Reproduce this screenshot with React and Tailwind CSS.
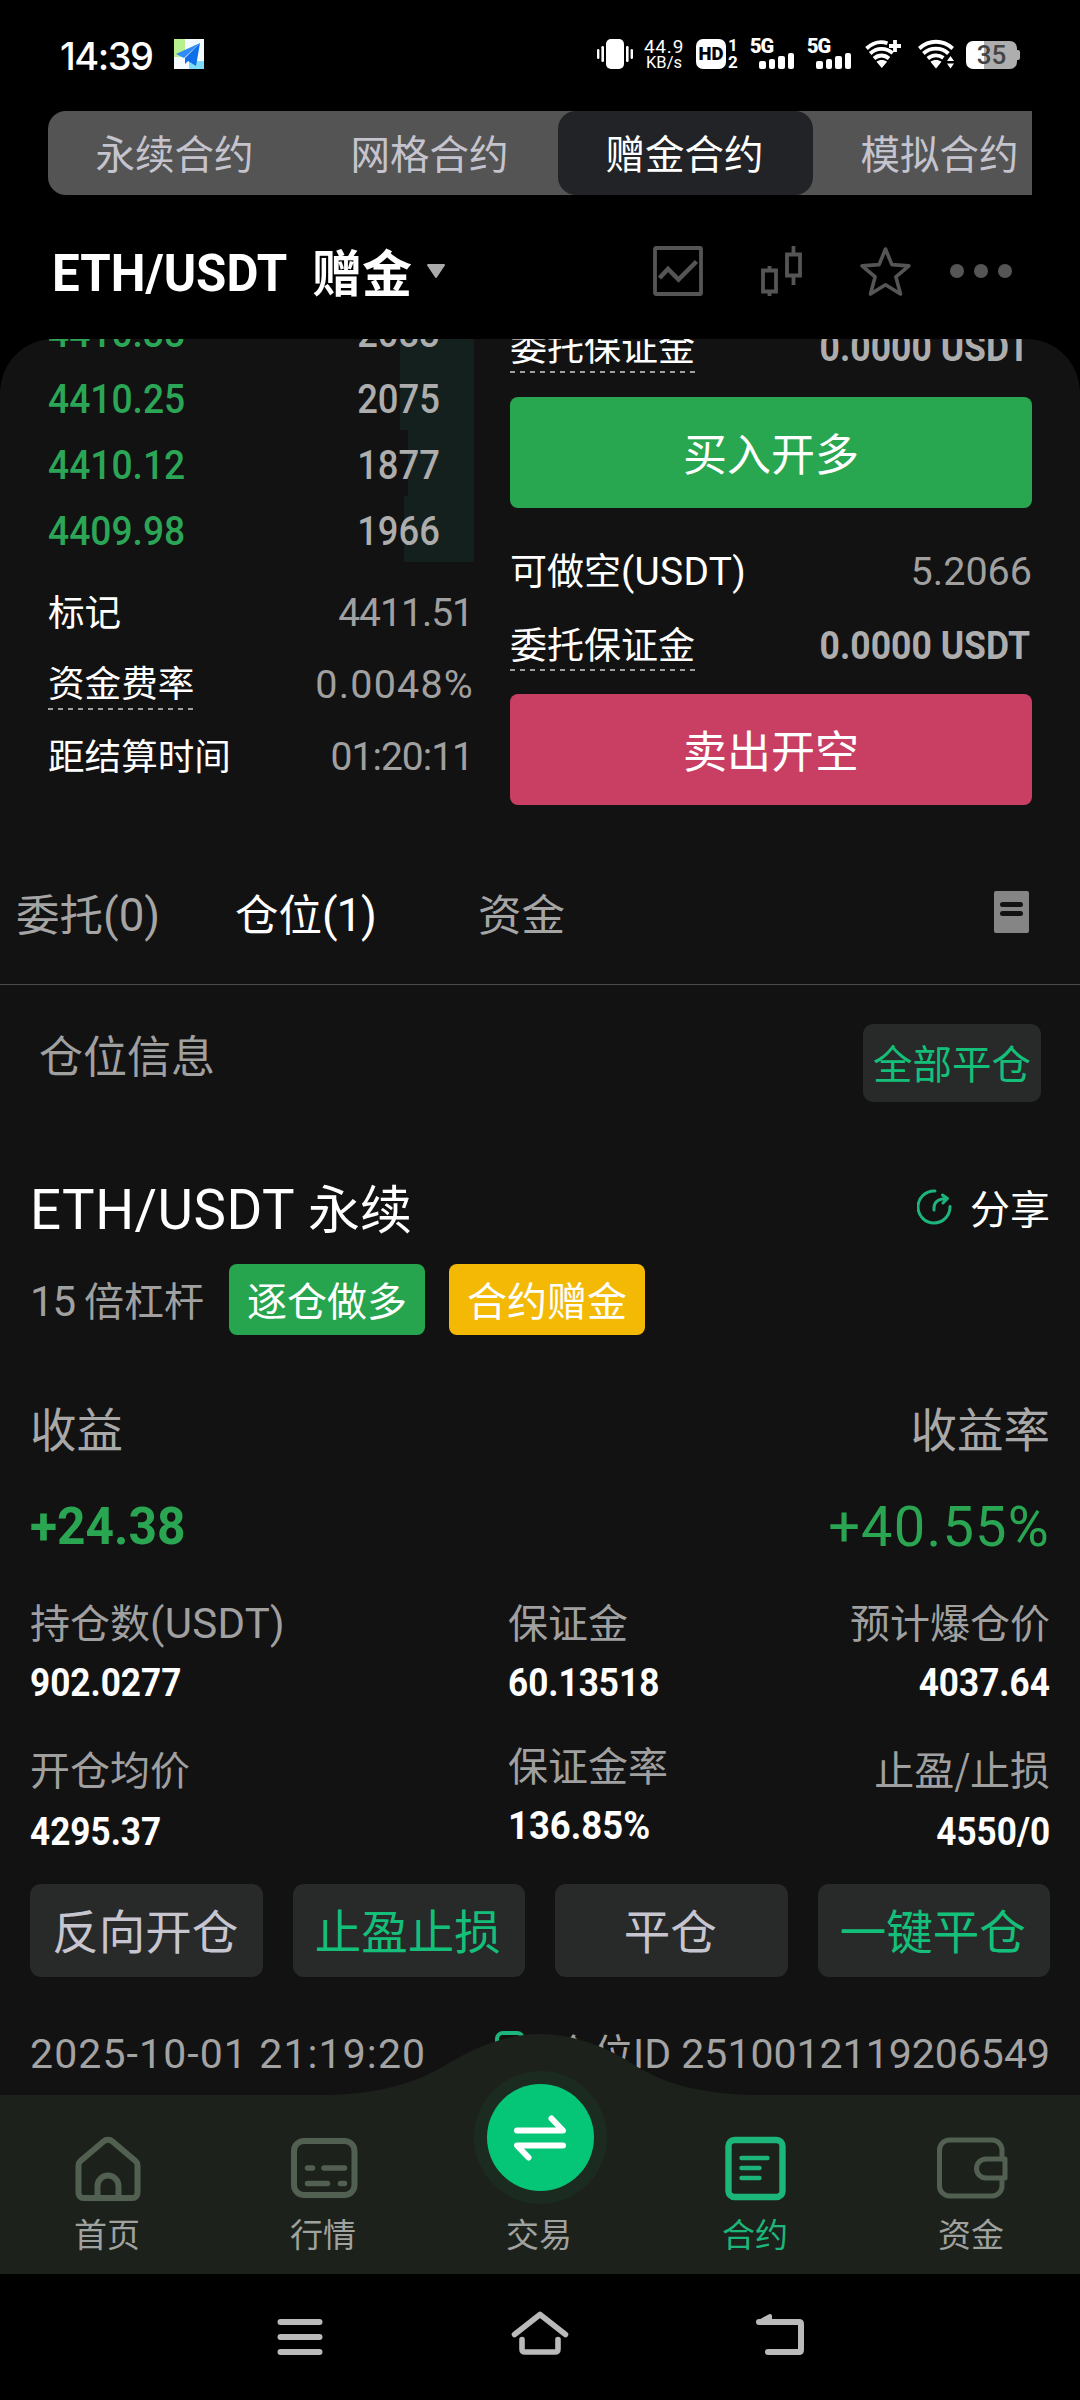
import React from "react";

/* ---------- status bar glyphs ---------- */

function MapAppIcon() {
  return (
    <svg width="30" height="30" viewBox="0 0 30 30">
      <rect width="30" height="30" fill="#f4fbff" />
      <rect width="11" height="18" fill="#b9f08f" />
      <path d="M15 22h15v8H15z" fill="#7fdcf8" />
      <path d="M26 4 2 15l8 4z" fill="#2f8bf5" />
      <path d="M26 4 22 27l-8-5-3 3v-6z" fill="#0f6fe8" />
    </svg>
  );
}

function VibrateIcon() {
  return (
    <svg width="36" height="30" viewBox="0 0 36 30" fill="#fff">
      <rect x="9" width="18" height="30" rx="5" />
      <rect x="0" y="10" width="2.4" height="10" rx="1.2" />
      <rect x="4.4" y="7" width="2.6" height="16" rx="1.3" />
      <rect x="29" y="7" width="2.6" height="16" rx="1.3" />
      <rect x="33.6" y="10" width="2.4" height="10" rx="1.2" />
    </svg>
  );
}

function HdIcon() {
  return (
    <div className="flex h-[30px] w-[42px]">
      <div className="flex h-[30px] w-[30px] shrink-0 items-center justify-center rounded-[7px] bg-white font-['Roboto'] text-[18.5px] leading-none font-black text-black">
        HD
      </div>
      <div className="flex flex-col justify-between pl-[2px] font-['Roboto'] text-[17px] leading-[13px] font-bold">
        <span>1</span>
        <span>2</span>
      </div>
    </div>
  );
}

function SignalIcon() {
  return (
    <div className="flex h-[30px] w-[44px] flex-col">
      <span className="h-[15px] font-['Roboto'] text-[20px] leading-[15px] font-black tracking-[-1px]">5G</span>
      <div className="-mt-px flex h-4 items-end gap-[3px] pl-[9px]">
        <div className="h-[8px] w-[6.5px] rounded-[2px] bg-white" />
        <div className="h-[10px] w-[6.5px] rounded-[2px] bg-white" />
        <div className="h-[13px] w-[6.5px] rounded-[2px] bg-white" />
        <div className="h-[16px] w-[6.5px] rounded-[2px] bg-white" />
      </div>
    </div>
  );
}

function WifiIcon({ variant }) {
  return (
    <svg width="36" height="30" viewBox="0 0 36 30" fill="none" stroke="#fff" strokeWidth="3.8">
      {variant === "plus" ? (
        <>
          <path d="M1.5 9.5C8 3.4 16 2 22.5 4.2" />
          <path d="M5.2 14.5c6.5-6 16-6.2 22.5-.3" />
          <path d="M9 19.5c4.5-4 10.5-4 15 0" />
          <path d="m11.5 22.8 5.3 6.2 5.3-6.2c-3-2.400-7.600-2.400-10.600 0z" fill="#fff" stroke="none" />
          <path d="M30 1v12M24 7h12" />
        </>
      ) : (
        <>
          <path d="M1.3 9.5c9.7-9 23.7-9 33.4 0" />
          <path d="M5.4 14.5c7-6.5 18-6.5 25 0" />
          <path d="M9.8 19.5c4.7-4 11-4 15.6-.6" />
          <path d="m12.5 22.8 5.5 6.700 5.500-6.700c-3-2.400-8-2.400-11 0z" fill="#fff" stroke="none" />
          <path d="m32.500 17 3.500 5h-7zM32.500 29.500l-3.500-5h7z" fill="#fff" stroke="none" />
        </>
      )}
    </svg>
  );
}

function Battery() {
  return (
    <div className="mt-px flex w-[54px] items-center">
      <div className="flex h-[28px] w-[51px] items-center justify-center rounded-[7px] bg-linear-to-r from-white from-35% to-[#aeaeae] to-35% font-['Roboto'] text-[26px] leading-none font-medium text-[#444]">
        35
      </div>
      <div className="h-[10px] w-[3px] rounded-r-[2px] bg-[#aeaeae]" />
    </div>
  );
}

function StatusBar() {
  return (
    <div className="mb-[3px] flex h-[108px] shrink-0 items-center pr-[60px] pl-[60px] text-white">
      <span className="w-[114px] pt-[4px] font-['Inter'] text-[38px] leading-none font-medium tracking-[-1.5px]">14:39</span>
      <MapAppIcon />
      <div className="ml-auto flex items-center">
        <VibrateIcon />
        <div className="ml-[10px] flex w-[42px] flex-col items-center font-['Roboto'] leading-[16px]">
          <span className="text-[19px] leading-[17px] tracking-[0.8px]">44.9</span>
          <span className="text-[16.5px]">KB/s</span>
        </div>
        <div className="ml-[11px]">
          <HdIcon />
        </div>
        <div className="ml-[12px]">
          <SignalIcon />
        </div>
        <div className="ml-[13px]">
          <SignalIcon />
        </div>
        <div className="ml-[14px]">
          <WifiIcon variant="plus" />
        </div>
        <div className="mr-[12px] ml-[17px]">
          <WifiIcon />
        </div>
        <Battery />
      </div>
    </div>
  );
}

/* Latin letters and digits set inside a Chinese line */
function Latin({ children, spacing = "tracking-normal" }) {
  return <span className={`font-['Roboto'] text-[1.05em] leading-none ${spacing}`}>{children}</span>;
}

/* ---------- header ---------- */

const productTabs = ["永续合约", "网格合约", "赠金合约", "模拟合约"];

function ProductTabs() {
  return (
    <div className="mx-[48px] flex h-[84px] shrink-0 overflow-hidden rounded-l-[18px] bg-[#545454]">
      {productTabs.map((tab, i) => (
        <div
          key={tab}
          className={
            i === 2
              ? "flex w-[255px] shrink-0 items-center justify-center rounded-[18px] bg-[#222327] pr-[2px] pb-[3px] text-[39.5px] text-white"
              : "flex w-[255px] shrink-0 items-center justify-center pr-[2px] pb-[3px] text-[39.5px] text-[#c5c4ce]"
          }
        >
          {tab}
        </div>
      ))}
    </div>
  );
}

function PairHeader() {
  return (
    <div className="flex h-[144px] shrink-0 items-center pt-[11px] pr-[68px] pl-[52px]">
      <div className="w-[260px]">
        <span className="mt-[2px] inline-block origin-left scale-x-[0.965] font-['Roboto'] text-[51px] leading-none font-bold whitespace-nowrap text-white">
          ETH/USDT
        </span>
      </div>
      <span className="-mt-[5px] text-[50px] leading-none font-bold text-white">赠金</span>
      <svg className="-mt-[2px] ml-[14px]" width="20" height="15" viewBox="0 0 20 15">
        <path d="M2 1h16l-8 12z" fill="#aaa" stroke="#aaa" strokeWidth="2" strokeLinejoin="round" />
      </svg>
      <div className="-mt-[4px] ml-auto flex items-center text-[#555]">
        <svg width="50" height="50" viewBox="0 0 50 50" fill="none" stroke="currentColor" strokeWidth="3.8">
          <rect x="2" y="2" width="46" height="46" rx="1" />
          <path d="m6.5 32 8.5-9 10.5 10.5L43.5 15.5" strokeWidth="4.5" />
        </svg>
        <svg className="ml-[58px]" width="42" height="50" viewBox="0 0 42 50" fill="none" stroke="currentColor" strokeWidth="3.8">
          <path d="M2 24.5h13v21H2zM8.5 20v4M8.5 46v4M26 8.5h13v21H26zM32.5 0v8M32.5 30v9" />
        </svg>
        <svg className="ml-[57px]" width="51" height="50" viewBox="0 0 51 50" fill="none" stroke="currentColor" strokeWidth="3.6" strokeLinejoin="round">
          <path d="m25.5 3 6.4 15.6 17 1.3-13 11 4.6 17.1-15-9.2-15 9.2 4.6-17.1-13-11 17-1.3z" />
        </svg>
        <svg className="ml-[39px]" width="62" height="14" viewBox="0 0 62 14" fill="currentColor">
          <circle cx="7" cy="7" r="7" />
          <circle cx="31" cy="7" r="7" />
          <circle cx="55" cy="7" r="7" />
        </svg>
      </div>
    </div>
  );
}

/* ---------- order book and order form ---------- */

const bids = [
  { price: "4410.38", qty: "2083", bar: 74 },
  { price: "4410.25", qty: "2075", bar: 74 },
  { price: "4410.12", qty: "1877", bar: 66 },
  { price: "4409.98", qty: "1966", bar: 70 },
];

function DottedLabel({ children }) {
  return (
    <div className="flex flex-col">
      <span className="leading-[52px]">{children}</span>
      <div className="h-[2px] bg-[repeating-linear-gradient(90deg,#a0a0a0_0_5px,transparent_5px_10px)]" />
    </div>
  );
}

function OrderBook() {
  return (
    <div className="-mt-[41px] w-[426px] text-[36.6px]">
      {bids.map((b) => (
        <div key={b.price} className="relative flex h-[66px] items-center justify-between pr-[34px] font-['Roboto'] text-[40px] font-medium">
          <div className="absolute top-0 right-0 h-full bg-[#13201d]" style={{ width: b.bar }} />
          <span className="relative mt-[6px] origin-left scale-x-[0.93] text-[#2ba657]">{b.price}</span>
          <span className="relative mt-[6px] origin-right scale-x-[0.91] text-[#adadad]">{b.qty}</span>
        </div>
      ))}
      <div className="mt-[13px] flex h-[72px] items-center justify-between text-white">
        <span>标记</span>
        <span className="mt-[5px] mr-[1px] font-['Roboto'] text-[39px] tracking-[-1px] text-[#a0a0a0]">4411.51</span>
      </div>
      <div className="flex h-[71px] items-center justify-between text-white">
        <DottedLabel>资金费率</DottedLabel>
        <span className="mt-[5px] font-['Roboto'] text-[39.5px] tracking-[1.2px] text-[#a0a0a0]">0.0048%</span>
      </div>
      <div className="flex h-[74px] items-center justify-between text-white">
        <span>距结算时间</span>
        <span className="mt-[5px] mr-[1px] font-['Roboto'] text-[39px] tracking-[-1px] text-[#a0a0a0]">01:20:11</span>
      </div>
    </div>
  );
}

function MarginRow() {
  return (
    <div className="flex h-[60px] items-center justify-between text-white">
      <DottedLabel>委托保证金</DottedLabel>
      <span className="mt-[4px] mr-[2px] origin-right scale-x-[0.935] font-['Roboto'] text-[38px] font-bold text-[#adadad]">0.0000 USDT</span>
    </div>
  );
}

function OrderForm() {
  return (
    <div className="-mt-[23px] w-[522px] text-[37px]">
      <MarginRow />
      <button className="mt-[21px] flex h-[111px] w-full items-center justify-center rounded-lg bg-[#28a650] pb-px text-[44px] text-white">
        买入开多
      </button>
      <div className="mt-[32px] flex h-[60px] items-center justify-between text-white">
        <span>
          可做空<Latin spacing="tracking-[0.3px]">(USDT)</Latin>
        </span>
        <span className="mt-[4px] font-['Roboto'] text-[39.5px] text-[#a0a0a0]">5.2066</span>
      </div>
      <div className="mt-[14px]">
        <MarginRow />
      </div>
      <button className="mt-[20px] flex h-[111px] w-full items-center justify-center rounded-lg bg-[#c83f63] pb-px text-[44px] text-white">
        卖出开空
      </button>
    </div>
  );
}

/* ---------- positions ---------- */

function SectionTabs() {
  return (
    <div className="flex h-[135px] items-center border-b border-[#4c4c4c] pr-[51px] pb-[8px] pl-[16px] text-[43.5px] text-[#a5a5a5]">
      <span className="w-[219px]">
        委托<Latin>(0)</Latin>
      </span>
      <span className="w-[243px] text-white">
        仓位<Latin spacing="tracking-[-1.2px]">(1)</Latin>
      </span>
      <span>资金</span>
      <svg className="-mt-[3px] ml-auto" width="35" height="42" viewBox="0 0 35 42">
        <rect width="35" height="42" rx="2" fill="#858585" />
        <rect x="6" y="11" width="23" height="5" rx="2.5" fill="#121212" />
        <rect x="6" y="20" width="23" height="5" rx="2.5" fill="#121212" />
      </svg>
    </div>
  );
}

function Stat({ label, value, labelClass, valueClass, align }) {
  return (
    <div className={align === "right" ? "flex flex-col items-end" : "flex flex-col items-start"}>
      <span className={labelClass}>{label}</span>
      <span className={align === "right" ? `origin-right ${valueClass}` : `origin-left ${valueClass}`}>{value}</span>
    </div>
  );
}

const statLabel = "h-[50px] text-[40px] leading-[50px] text-[#a0a0a0]";
const statValue = "mt-[12px] h-[50px] scale-x-[0.925] font-['Roboto'] text-[38px] leading-[50px] font-bold text-white";
const lowLabel = "mt-[35px] h-[50px] text-[40px] leading-[50px] text-[#a0a0a0]";
const lowValue = "mt-[14px] h-[50px] scale-x-[0.925] font-['Roboto'] text-[38px] leading-[50px] font-bold text-white";
const midLabel = "mt-[31px] h-[50px] text-[40px] leading-[50px] text-[#a0a0a0]";
const midValue = "mt-[12px] h-[50px] scale-x-[0.96] font-['Roboto'] text-[38px] leading-[50px] font-bold text-white";

function PositionCard() {
  return (
    <div className="px-[30px]">
      <div className="mt-[65px] flex h-[80px] items-center justify-between text-white">
        <span className="text-[52px]">
          <Latin spacing="tracking-[0.5px]">ETH/USDT </Latin>永续
        </span>
        <div className="flex items-center text-[40px]">
          <svg className="mr-[18px]" width="35" height="36" viewBox="0 0 35 36" fill="none" stroke="#1db57c" strokeWidth="3" strokeLinecap="round" strokeLinejoin="round">
            <path d="M18 2A16 16 0 1 0 33 17.5" />
            <path d="M17 21c-.5-7 3-11.5 13-11.5M25.5 6l5 3.5-4.5 4.5" />
          </svg>
          分享
        </div>
      </div>
      <div className="mt-[17px] flex h-[71px] items-center text-[40px]">
        <span className="w-[199px] pb-[2px] text-[#a0a0a0]">
          <Latin spacing="tracking-[-1.2px]">15 </Latin>倍杠杆
        </span>
        <span className="flex h-full w-[196px] items-center justify-center rounded-lg bg-[#26a54e] pb-[2px] text-white">逐仓做多</span>
        <span className="ml-[24px] flex h-full w-[196px] items-center justify-center rounded-lg bg-[#f3b905] pb-[2px] text-white">合约赠金</span>
      </div>
      <div className="mt-[62px] flex h-[60px] items-center justify-between text-[46.5px] text-[#a8a8a8]">
        <span>收益</span>
        <span>收益率</span>
      </div>
      <div className="mt-[35px] flex h-[70px] items-center justify-between text-[#2aa653]">
        <span className="origin-left scale-x-[0.955] font-['Roboto'] text-[52px] font-bold">+24.38</span>
        <span className="font-['Roboto'] text-[56px] tracking-[1.2px]">+40.55%</span>
      </div>
      <div className="mt-[34px] grid grid-cols-[478px_1fr_auto]">
        <Stat label={<>持仓数<Latin spacing="tracking-[0.3px]">(USDT)</Latin></>} value="902.0277" labelClass={statLabel} valueClass={statValue} />
        <Stat label="保证金" value="60.13518" labelClass={statLabel} valueClass={statValue} />
        <Stat label="预计爆仓价" value="4037.64" labelClass={statLabel} valueClass={statValue} align="right" />
        <Stat label="开仓均价" value="4295.37" labelClass={lowLabel} valueClass={lowValue} />
        <Stat label="保证金率" value="136.85%" labelClass={midLabel} valueClass={midValue} />
        <Stat label="止盈/止损" value="4550/0" labelClass={lowLabel} valueClass={lowValue} align="right" />
      </div>
      <div className="mt-[27px] grid h-[93px] grid-cols-4 gap-[30px] text-[46.5px]">
        <button className="rounded-[11px] bg-[#282929] pr-[2px] pb-[3px] text-[#c6c5d0]">反向开仓</button>
        <button className="rounded-[11px] bg-[#282929] pr-[2px] pb-[3px] text-[#14bf7a]">止盈止损</button>
        <button className="rounded-[11px] bg-[#282929] pr-[2px] pb-[3px] text-[#c6c5d0]">平仓</button>
        <button className="rounded-[11px] bg-[#282929] pr-[2px] pb-[3px] text-[#14bf7a]">一键平仓</button>
      </div>
      <div className="mt-[46px] flex h-[60px] items-center justify-between text-[40px] whitespace-nowrap text-[#a3a3a3]">
        <span className="pt-[3px] font-['Roboto'] text-[41px] tracking-[1.1px]">2025-10-01 21:19:20</span>
        <div className="-mt-[4px] flex items-center">
          <svg className="mr-[26px]" width="34" height="40" viewBox="0 0 34 40" fill="none" stroke="#1db57c" strokeWidth="4">
            <rect x="4" y="2" width="26" height="30" rx="6" />
          </svg>
          <span>
            仓位
            <span className="font-['Roboto'] text-[41px] leading-none">ID 2510012119206549</span>
          </span>
        </div>
      </div>
    </div>
  );
}

/* ---------- bottom navigation ---------- */

function HomeIcon() {
  return (
    <svg width="72" height="72" viewBox="0 0 72 72" fill="none" stroke="#516050" strokeWidth="6" strokeLinejoin="round">
      <path d="M6.5 33.5a6 6 0 0 1 2-4.5L31.5 9.5a7 7 0 0 1 9 0L63.5 29a6 6 0 0 1 2 4.5V61a5 5 0 0 1-5 5h-49a5 5 0 0 1-5-5z" />
      <path d="M25.5 66V54a10.500 10.500 0 0 1 21 0v12" />
    </svg>
  );
}

function MarketIcon() {
  return (
    <svg width="72" height="72" viewBox="0 0 72 72" fill="none" stroke="#516050" strokeWidth="6" strokeLinecap="round">
      <rect x="6" y="9" width="60.5" height="54" rx="10" />
      <path d="M19.5 36h5M36 36h20.5M19.5 51.5h20M52.5 51.5h4" strokeWidth="5.5" />
    </svg>
  );
}

function ContractIcon() {
  return (
    <svg width="72" height="72" viewBox="0 0 72 72" fill="none" stroke="#1cb67a" strokeWidth="6.4" strokeLinecap="round">
      <rect x="8.5" y="8" width="54" height="57" rx="6" />
      <path d="M21.5 26h26M21.5 36h18M21.5 46h18" strokeWidth="4.4" />
    </svg>
  );
}

function WalletIcon() {
  return (
    <svg width="72" height="72" viewBox="0 0 72 72" fill="none" stroke="#516050" strokeWidth="5" strokeLinejoin="round">
      <path d="M66 25V18a10 10 0 0 0-10-10H13.5a10 10 0 0 0-10 10v36a10 10 0 0 0 10 10H56a10 10 0 0 0 10-10v-7" />
      <path d="M69 27v19H50a9.500 9.500 0 0 1 0-19z" />
    </svg>
  );
}

function NavItem({ icon, label, active }) {
  return (
    <div className="flex flex-col items-center pt-[98px]">
      {icon}
      <span
        className={
          active
            ? "mt-[9px] pr-[2px] text-[33px] leading-[40px] text-[#1cb67a]"
            : "mt-[9px] pr-[2px] text-[33px] leading-[40px] text-[#a0a29f]"
        }
      >
        {label}
      </span>
    </div>
  );
}

function BottomNav() {
  return (
    <nav className="relative -mt-[61px] h-[240px] shrink-0">
      <svg className="absolute inset-0" width="1080" height="240" viewBox="0 0 1080 240">
        <path
          d="M0 61H325C390 60 424 44 448 29.5S505 0 540 0s68 14 92 29.5S690 60 755 61h325v179H0z"
          fill="#1c211c"
        />
      </svg>
      <div className="relative grid grid-cols-5">
        <NavItem icon={<HomeIcon />} label="首页" />
        <NavItem icon={<MarketIcon />} label="行情" />
        <div className="flex flex-col items-center pt-[37px]">
          <div className="flex h-[133px] w-[133px] items-center justify-center rounded-full bg-[#1c2b1f]">
            <div className="flex h-[107px] w-[107px] items-center justify-center rounded-full bg-[#05c577]">
              <svg width="56" height="48" viewBox="0 0 56 48" fill="none" stroke="#fff" strokeWidth="6" strokeLinecap="round" strokeLinejoin="round">
                <path d="M5 16.5h46L39.5 4.5" />
                <path d="M51 31.5H5L16.5 43.5" />
              </svg>
            </div>
          </div>
          <span className="mt-[9px] pr-[2px] text-[33px] leading-[40px] text-[#a0a29f]">交易</span>
        </div>
        <NavItem icon={<ContractIcon />} label="合约" active />
        <NavItem icon={<WalletIcon />} label="资金" />
      </div>
    </nav>
  );
}

function SystemBar() {
  return (
    <div className="flex flex-1 items-center justify-center gap-[180px] bg-black">
      <svg width="60" height="60" viewBox="0 0 60 60" stroke="#bababa" strokeWidth="6" strokeLinecap="round">
        <path d="M10.5 15h39M10.5 30h39M10.5 45h39" />
      </svg>
      <svg width="60" height="60" viewBox="0 0 60 60" fill="none" stroke="#bababa" strokeWidth="5.6" strokeLinecap="round" strokeLinejoin="round">
        <path d="M4.5 27.5 30 7.5 55.500 27.500" />
        <path d="M12 32.5V42q0 3 3 3h30q3 0 3-3v-9.500" />
      </svg>
      <svg width="60" height="60" viewBox="0 0 60 60" fill="none" stroke="#bababa" strokeWidth="6" strokeLinecap="round" strokeLinejoin="round">
        <path d="M9 15h40q2 0 2 2v26q0 2-2 2H18" />
        <path d="m9 15 11-6v6z" fill="#bababa" strokeWidth="4" />
      </svg>
    </div>
  );
}

export default function App() {
  return (
    <div className="flex h-[2400px] w-[1080px] flex-col overflow-hidden bg-black font-['Noto_Sans_CJK_SC',sans-serif] font-normal">
      <StatusBar />
      <ProductTabs />
      <PairHeader />
      <main className="h-[1756px] shrink-0 overflow-hidden rounded-t-[54px] bg-[#121212]">
        <div className="flex h-[511px] justify-between pr-[48px] pl-[48px]">
          <OrderBook />
          <OrderForm />
        </div>
        <SectionTabs />
        <div className="flex items-start justify-between pt-[39px] pr-[39px] pl-[39px]">
          <span className="pt-[1px] text-[44px] leading-[58px] text-[#a0a0a0]">仓位信息</span>
          <button className="h-[78px] w-[178px] rounded-[10px] bg-[#282929] pb-[2px] text-[39.5px] text-[#14bf7a]">全部平仓</button>
        </div>
        <PositionCard />
      </main>
      <BottomNav />
      <SystemBar />
    </div>
  );
}
